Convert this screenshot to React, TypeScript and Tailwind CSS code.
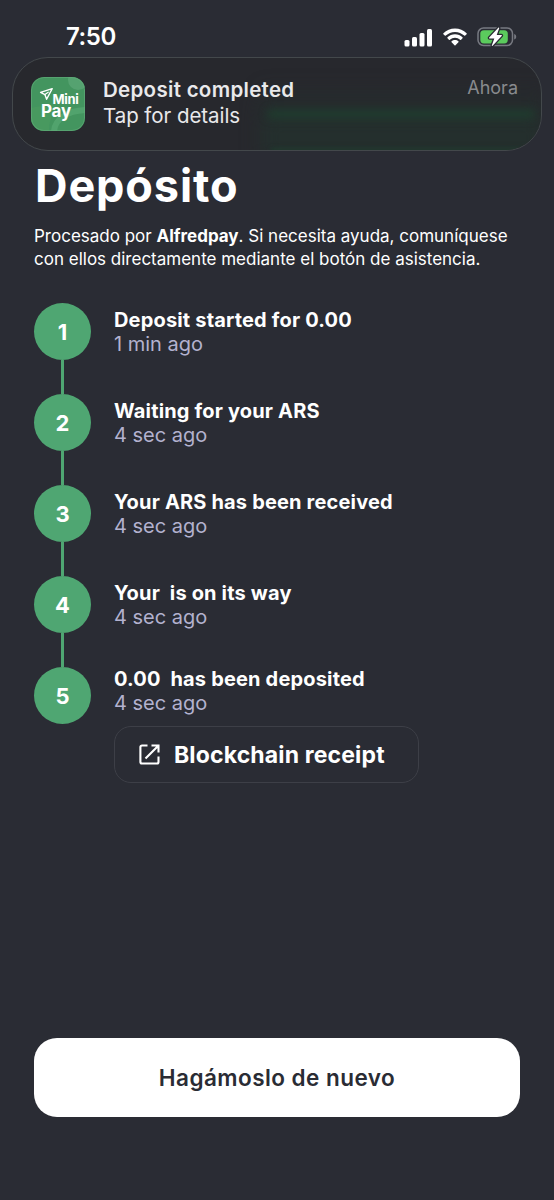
import React from 'react';

const steps = [
  { title: 'Deposit started for 0.00', time: '1 min ago' },
  { title: 'Waiting for your ARS', time: '4 sec ago' },
  { title: 'Your ARS has been received', time: '4 sec ago' },
  { title: 'Your  is on its way', time: '4 sec ago' },
  { title: '0.00  has been deposited', time: '4 sec ago' },
];

function StatusBar() {
  return (
    <div className="flex h-[57px] items-start justify-between pt-[22px] pr-[37px] pl-[66px]">
      <span className="text-[24px] leading-[30px] font-semibold tracking-[-0.4px]">7:50</span>
      <div className="flex items-center gap-[10px] pt-[5px]">
        <svg width="29" height="19" viewBox="0 0 29 19" fill="white">
          <rect x="0.5" y="12" width="5" height="6.5" rx="1.5" />
          <rect x="8" y="9" width="5" height="9.5" rx="1.5" />
          <rect x="15.5" y="5" width="5" height="13.5" rx="1.5" />
          <rect x="23" y="1" width="5" height="17.5" rx="1.5" />
        </svg>
        <svg width="24" height="18" viewBox="0 0 24 18" fill="white">
          <path d="M12 0.5C16.5 0.5 20.6 2.3 23.6 5.2C23.9 5.5 23.9 5.9 23.6 6.2L22.2 7.6C21.9 7.9 21.5 7.9 21.2 7.6C18.8 5.3 15.6 3.9 12 3.9C8.4 3.9 5.2 5.3 2.8 7.6C2.5 7.9 2.1 7.9 1.8 7.6L0.4 6.2C0.1 5.9 0.1 5.5 0.4 5.2C3.4 2.3 7.5 0.5 12 0.5Z" />
          <path d="M12 6.3C14.9 6.3 17.5 7.4 19.5 9.2C19.8 9.5 19.8 10 19.5 10.3L18.1 11.7C17.8 12 17.4 12 17.1 11.7C15.7 10.5 13.9 9.7 12 9.7C10.1 9.7 8.3 10.5 6.9 11.7C6.6 12 6.2 12 5.9 11.7L4.5 10.3C4.2 10 4.2 9.5 4.5 9.2C6.5 7.4 9.1 6.3 12 6.3Z" />
          <path d="M12 12.1C13.3 12.1 14.5 12.6 15.4 13.3C15.7 13.6 15.7 14 15.4 14.3L12.5 17.2C12.2 17.5 11.8 17.5 11.5 17.2L8.6 14.3C8.3 14 8.3 13.6 8.6 13.3C9.5 12.6 10.7 12.1 12 12.1Z" />
        </svg>
        <svg width="40" height="20" viewBox="0 0 40 20" fill="none">
          <rect x="1" y="1" width="34.5" height="17.5" rx="5.5" stroke="#777981" strokeWidth="1.5" />
          <path d="M37.2 7C38.6 7.5 39.2 8.5 39.2 9.8C39.2 11.1 38.6 12.1 37.2 12.6Z" fill="#777981" />
          <rect x="3.3" y="3.2" width="27.5" height="13.2" rx="3.6" fill="#5bcb5d" />
          <path
            d="M21.3 0.8L12.2 10.5C11.9 11 12.1 11.5 12.7 11.5H17.3L14.8 18.4C14.7 19 15.2 19.2 15.6 18.8L24.7 9C25.1 8.5 24.8 8 24.2 8H19.7L22.2 1.2C22.3 0.6 21.7 0.4 21.3 0.8Z"
            fill="white"
            stroke="#292b32"
            strokeWidth="2.6"
            paintOrder="stroke"
          />
        </svg>
      </div>
    </div>
  );
}

function MiniPayLogo() {
  return (
    <div className="relative h-[54px] w-[54px] shrink-0 overflow-hidden rounded-[13px] bg-[#43955f]">
      <svg className="absolute inset-0" width="54" height="54" viewBox="0 0 54 54" fill="none">
        <path d="M0 31C10 28 19 29 26 33C20 38 18 46 18 54H0Z" fill="#48995f" />
        <path d="M23 54C24 42 36 34 54 33" stroke="#51a36d" strokeWidth="6" />
        <circle cx="47" cy="3" r="10" fill="#55a270" />
        <rect x="0.5" y="0.5" width="53" height="53" rx="12.5" stroke="#64ae7c" strokeOpacity="0.6" />
        <path d="M21.2 11.6L9.6 15.3L13.9 17.6L15.6 22.3Z" stroke="white" strokeWidth="1.4" strokeLinejoin="round" />
        <path d="M13.9 17.6L17.2 15.2" stroke="white" strokeWidth="1.2" strokeLinecap="round" />
      </svg>
      <div className="relative flex flex-col pt-[17px] pl-[10px] text-white">
        <span className="pl-[11.5px] text-[13px] leading-[11px] font-bold tracking-[-0.3px]">Mini</span>
        <span className="text-[17px] leading-[13px] font-bold tracking-[-0.2px]">Pay</span>
      </div>
    </div>
  );
}

function Notification() {
  return (
    <div className="relative mx-[12px] flex h-[94px] overflow-hidden rounded-[36px] border border-[#43484b] bg-[#27282d] pt-[19px] pr-[23px] pl-[18px]">
      {/* green glow bleeding through the glass */}
      <div className="absolute top-[26px] -right-[4px] -bottom-[10px] w-[285px] bg-linear-to-b from-transparent to-[#242f2d] to-50% blur-[9px]" />
      <div className="absolute top-[52px] right-[6px] h-[8px] w-[268px] rounded-full bg-[#1b4630]/65 blur-[4px]" />
      <div className="absolute right-[20px] -bottom-[2px] h-[4px] w-[250px] bg-[#1b4630]/50 blur-[2px]" />
      <MiniPayLogo />
      <div className="relative ml-[18px] flex-1 whitespace-nowrap">
        <p className="text-[20.5px] leading-[25px] font-semibold tracking-[0.3px] text-[#e9e9eb]">Deposit completed</p>
        <p className="text-[20.5px] leading-[27px] tracking-[-0.05px] text-[#e9e9eb]">Tap for details</p>
      </div>
      <span className="relative text-[18px] leading-[21px] text-[#898b8e]">Ahora</span>
    </div>
  );
}

export default function App() {
  return (
    <div className="flex h-[1200px] w-[554px] flex-col bg-[#2a2c34] font-['Inter',sans-serif] text-white">
      <StatusBar />
      <Notification />

      <main className="flex flex-1 flex-col px-[34px] pt-[8px]">
        <h1 className="pl-px text-[45px] leading-[54px] font-bold tracking-[0.9px]">Depósito</h1>
        <p className="mt-[12px] text-[17px] leading-[23px] whitespace-nowrap">
          Procesado por <b>Alfredpay</b>. Si necesita ayuda, comuníquese
          <br />
          con ellos directamente mediante el botón de asistencia.
        </p>

        <div className="mt-[32px]">
          {steps.map((step, index) => {
            const last = index === steps.length - 1;
            return (
              <div key={index} className="flex">
                <div className="flex w-[57px] flex-col items-center">
                  <div className="flex h-[57px] w-[57px] items-center justify-center rounded-full bg-[#4fa672] pt-[2px] text-[22px] font-bold">
                    {index + 1}
                  </div>
                  {!last && <div className="h-[34px] w-[3px] bg-[#4fa672]" />}
                </div>
                <div className={last ? 'ml-[23px]' : 'ml-[23px] pt-[5px]'}>
                  <p className="text-[20px] leading-[24px] font-bold tracking-[0.17px] whitespace-pre">{step.title}</p>
                  <p className="text-[20px] leading-[24px] text-[#b3b2cf]">{step.time}</p>
                  {last && (
                    <button className="mt-[11px] flex h-[57px] w-[305px] items-center rounded-[17px] border border-[#3d3f47] pt-px pl-[24px] text-[23px] font-bold tracking-[0.15px]">
                      <svg className="mr-[14px] mb-[2px]" width="21" height="21" viewBox="0 0 21 21" fill="none" stroke="white" strokeWidth="2.1">
                        <path d="M8.5 1.5H3C2 1.5 1.4 2.2 1.4 3V18C1.4 18.9 2 19.5 3 19.5H18C19 19.5 19.5 18.9 19.5 18V12.5" />
                        <path d="M12.5 1.5H19.5V8.5M19.3 1.7L6.5 14.5" />
                      </svg>
                      Blockchain receipt
                    </button>
                  )}
                </div>
              </div>
            );
          })}
        </div>

        <button className="mt-auto mb-[83px] h-[79px] w-full rounded-[23px] bg-white text-[22.5px] font-semibold tracking-[0.45px] text-[#2a2c34]">
          Hagámoslo de nuevo
        </button>
      </main>
    </div>
  );
}
